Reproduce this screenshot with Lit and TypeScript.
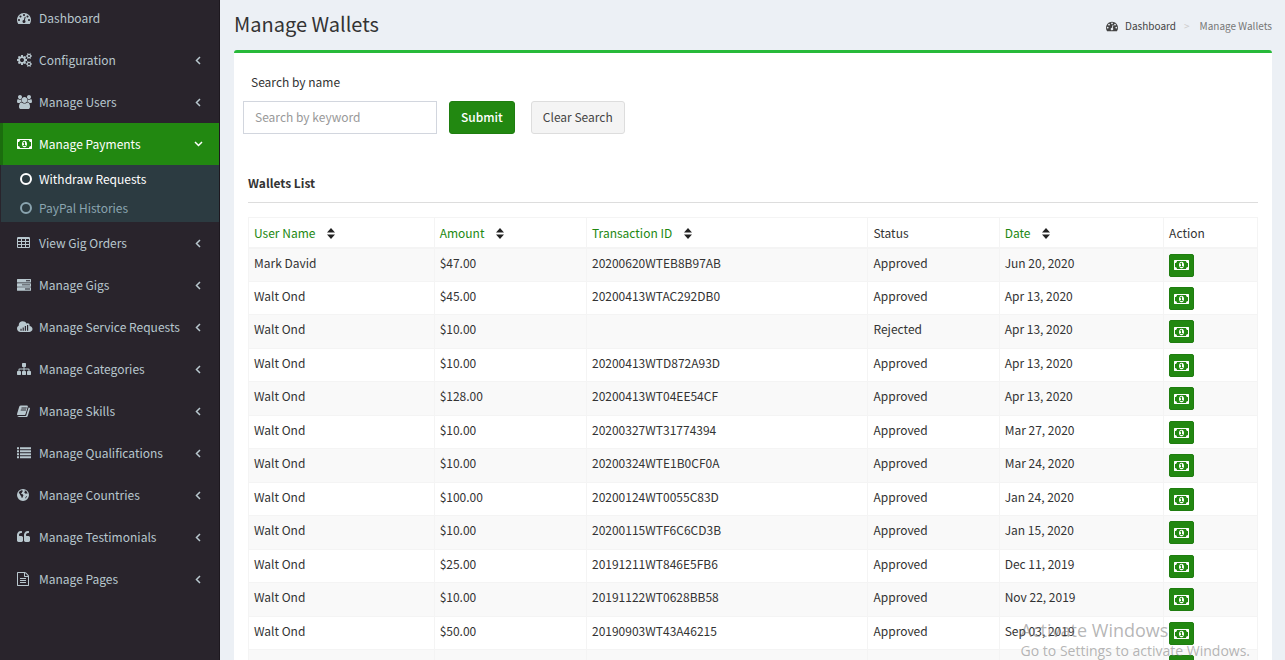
import { LitElement, html, css, svg } from "lit";
import { customElement, property } from "lit/decorators.js";

const small = (dy: number) =>
  `M1664 ${1408 + dy}q0-52-38-90t-90-38-90 38-38 90q0 53 37.5 90.5t90.5 37.5 90.5-37.5 37.5-90.5zM1920 ${1338 + dy}v140q0 16-149 31-12 27-30 52 51 113 51 138 0 4-4 7-122 71-124 71-8 0-46-47t-52-68q-20 2-30 2t-30-2q-14 21-52 68t-46 47q-2 0-124-71-4-3-4-7 0-25 51-138-18-25-30-52-149-15-149-31v-140q0-16 149-31 13-29 30-52-51-113-51-138 0-4 4-7 4-2 35-20t59-34 30-16q8 0 46 46.5t52 67.5q20-2 30-2t30 2q51-71 92-112l6-2q4 0 124 70 4 3 4 7 0 25-51 138 17 23 30 52 149 15 149 31z`;

const quote = (x: number) =>
  `M${x} 960v384q0 80-56 136t-136 56h-384q-80 0-136-56t-56-136v-704q0-104 40.5-198.5t109.5-163.5 163.5-109.5 198.5-40.5h64q26 0 45 19t19 45v128q0 26-19 45t-45 19h-64q-106 0-181 75t-75 181v32q0 40 28 68t68 28h224q80 0 136 56t56 136z`;

const rect = (x: number, y: number, w: number, h: number) => `M${x} ${y}h${w}v${h}h${-w}z`;

const ICONS: Record<string, { w: number; d: string }> = {
  dashboard: {
    w: 1792,
    d: "M384 1152q0-53-37.5-90.5t-90.5-37.5-90.5 37.5-37.5 90.5 37.5 90.5 90.5 37.5 90.5-37.5 37.5-90.5zm192-448q0-53-37.5-90.5t-90.5-37.5-90.5 37.5-37.5 90.5 37.5 90.5 90.5 37.5 90.5-37.5 37.5-90.5zm428 481l101-382q6-26-7.5-48.5t-38.5-29.5-48 6.5-30 39.5l-101 382q-60 5-107 43.5t-63 98.5q-20 77 20 146t117 89 146-20 89-117q16-60-6-117t-72-91zm660-33q0-53-37.5-90.5t-90.5-37.5-90.5 37.5-37.5 90.5 37.5 90.5 90.5 37.5 90.5-37.5 37.5-90.5zm-640-640q0-53-37.5-90.5t-90.5-37.5-90.5 37.5-37.5 90.5 37.5 90.5 90.5 37.5 90.5-37.5 37.5-90.5zm448 192q0-53-37.5-90.5t-90.5-37.5-90.5 37.5-37.5 90.5 37.5 90.5 90.5 37.5 90.5-37.5 37.5-90.5zm320 448q0 261-141 483-19 29-54 29h-1402q-35 0-54-29-141-221-141-483 0-182 71-348t191-286 286-191 348-71 348 71 286 191 191 286 71 348z",
  },
  cogs: {
    w: 1920,
    d:
      "M896 896q0-106-75-181t-181-75-181 75-75 181 75 181 181 75 181-75 75-181zM1280 805v185q0 10-7 19.5t-16 10.5l-155 24q-11 35-32 76 34 48 90 115 7 11 7 20 0 12-7 19-23 30-82.5 89.5t-78.5 59.5q-11 0-21-7l-115-90q-37 19-77 31-11 108-23 155-7 24-30 24h-186q-11 0-20-7.5t-10-17.5l-23-153q-34-10-75-31l-118 89q-7 7-20 7-11 0-21-8-144-133-144-160 0-9 7-19 10-14 41-53t47-61q-23-44-35-82l-152-24q-10-1-17-9.5t-7-19.5v-185q0-10 7-19.5t16-10.5l155-24q11-35 32-76-34-48-90-115-7-11-7-20 0-12 7-20 22-30 82-89t79-59q11 0 21 7l115 90q34-18 77-32 11-108 23-154 7-24 30-24h186q11 0 20 7.5t10 17.5l23 153q34 10 75 31l118-89q8-7 20-7 11 0 21 8 144 133 144 160 0 8-7 19-12 16-42 54t-45 60q23 48 34 82l152 23q10 2 17 10.5t7 19.5z" +
      small(0) +
      small(-1024),
  },
  users: {
    w: 1920,
    d: "M593 896q-162 5-265 128h-134q-82 0-138-40.5t-56-118.5q0-353 124-353 6 0 43.5 21t97.5 42.5 119 21.5q67 0 133-23-5 37-5 66 0 139 81 256zm1071 637q0 120-73 189.5t-194 69.5h-874q-121 0-194-69.5t-73-189.5q0-53 3.5-103.5t14-109 26.5-108.5 43-97.5 62-81 85.5-53.5 111.5-20q10 0 43 21.5t73 48 107 48 135 21.5 135-21.5 107-48 73-48 43-21.5q61 0 111.5 20t85.5 53.5 62 81 43 97.5 26.5 108.5 14 109 3.5 103.5zm-1024-1277q0 106-75 181t-181 75-181-75-75-181 75-181 181-75 181 75 75 181zm704 384q0 159-112.5 271.5t-271.5 112.5-271.5-112.5-112.5-271.5 112.5-271.5 271.5-112.5 271.5 112.5 112.5 271.5zm576 225q0 78-56 118.5t-138 40.5h-134q-103-123-265-128 81-117 81-256 0-29-5-66 66 23 133 23 59 0 119-21.5t97.5-42.5 43.5-21q124 0 124 353zm-128-609q0 106-75 181t-181 75-181-75-75-181 75-181 181-75 181 75 75 181z",
  },
  money: {
    w: 1920,
    d: "M768 1152h384v-96h-128v-448h-114l-148 137 77 80q42-37 55-57h2v288h-128v96zm512-256q0 70-21 142t-59.5 134-101.5 101-138 39-138-39-101.5-101-59.5-134-21-142 21-142 59.5-134 101.5-101 138-39 138 39 101.5 101 59.5 134 21 142zm512 256v-512q-106 0-181-75t-75-181h-1152q0 106-75 181t-181 75v512q106 0 181 75t75 181h1152q0-106 75-181t181-75zm128-832v1152q0 26-19 45t-45 19h-1792q-26 0-45-19t-19-45v-1152q0-26 19-45t45-19h1792q26 0 45 19t19 45z",
  },
  table: {
    w: 1664,
    d:
      "M160 128h1344q66 0 113 47t47 113v1088q0 66-47 113t-113 47h-1344q-66 0-113-47t-47-113v-1088q0-66 47-113t113-47z" +
      [128, 640, 1152].map((x) => [384, 768, 1152].map((y) => rect(x, y, 384, 256)).join("")).join(""),
  },
  tasks: {
    w: 1792,
    d: [
      "M64 128h1664q64 0 64 64v320q0 64-64 64h-1664q-64 0-64-64v-320q0-64 64-64z" + rect(1152, 290, 512, 120),
      "M64 660h1664q64 0 64 64v320q0 64-64 64h-1664q-64 0-64-64v-320q0-64 64-64z" + rect(640, 822, 1024, 120),
      "M64 1192h1664q64 0 64 64v320q0 64-64 64h-1664q-64 0-64-64v-320q0-64 64-64z" + rect(1024, 1354, 640, 120),
    ].join(""),
  },
  cloud: {
    w: 1984,
    d:
      "M1600 768q22-48 22-104 0-106-75-181t-181-75q-84 0-154 50-64-138-194-222t-286-84q-212 0-362 150t-150 362v60q-100 50-160 148t-60 216q0 180 126 314t322 134h1120q160 0 288-116t128-284q0-138-108-246t-276-122z" +
      rect(440, 1120, 150, 256) + rect(720, 960, 150, 416) + rect(1000, 768, 150, 608) + rect(1280, 640, 150, 736),
  },
  sitemap: {
    w: 1792,
    d: "M1792 1248v320q0 40-28 68t-68 28h-320q-40 0-68-28t-28-68v-320q0-40 28-68t68-28h96v-192h-512v192h96q40 0 68 28t28 68v320q0 40-28 68t-68 28h-320q-40 0-68-28t-28-68v-320q0-40 28-68t68-28h96v-192h-512v192h96q40 0 68 28t28 68v320q0 40-28 68t-68 28h-320q-40 0-68-28t-28-68v-320q0-40 28-68t68-28h96v-192q0-52 38-90t90-38h512v-192h-96q-40 0-68-28t-28-68v-320q0-40 28-68t68-28h320q40 0 68 28t28 68v320q0 40-28 68t-68 28h-96v192h512q52 0 90 38t38 90v192h96q40 0 68 28t28 68z",
  },
  book: {
    w: 1664,
    d: "M1639 478q40 57 18 129l-275 906q-19 64-76.500 107.500t-122.500 43.500h-923q-77 0-148.500-53.500t-99.500-131.500q-24-67-2-127 0-4 3-27t4-37q1-8-3-21.500t-3-19.500l269-881q23-76 90-131t137-55h761q53 0 96 40t26 100l-272 896q-36 119-71 153t-127 34h-869q-27 0-38 15-11 16-1 43 24 70 144 70h923q29 0 56-15.500t35-41.500l300-987q7-22 5-57 38 15 59 43zM575 480l-21 64q-4 13 2 22.500t20 9.500h608q13 0 25.500-9.500t16.500-22.500l21-64q4-13-2-22.500t-20-9.500h-608q-13 0-25.500 9.500t-16.500 22.500zM492 736l-21 64q-4 13 2 22.500t20 9.500h608q13 0 25.500-9.500t16.500-22.500l21-64q4-13-2-22.500t-20-9.500h-608q-13 0-25.500 9.500t-16.500 22.500z",
  },
  list: {
    w: 1792,
    d: [160, 544, 928, 1312].map((y) => rect(0, y, 256, 240) + rect(384, y, 1408, 240)).join(""),
  },
  globe: {
    w: 1536,
    d: "M768 128a768 768 0 1 0 0 1536a768 768 0 1 0 0-1536zM560 300l150 20 60 90-120 60-20 130-110 60 60 110 150 30 90 130-60 150-90 200-80-20-50-220-130-130-60-190-130-90 60-160 130-100zM960 290l220 100 130 190 40 160-110-40-120 50-160-100-20-150 90-70zM1180 1050l90-20-20 110-200 210-30-40z",
  },
  quote: { w: 1664, d: quote(768) + quote(1664) },
  file: {
    w: 1536,
    d: "M1468 380q28 28 48 76t20 88v1152q0 40-28 68t-68 28h-1344q-40 0-68-28t-28-68v-1600q0-40 28-68t68-28h896q40 0 88 20t76 48zm-444-244v376h376q-10-29-22-41l-313-313q-12-12-41-22zm384 1528v-1024h-416q-40 0-68-28t-28-68v-416h-768v1536h1280zm-1024-864q0-14 9-23t23-9h704q14 0 23 9t9 23v64q0 14-9 23t-23 9h-704q-14 0-23-9t-9-23v-64zm736 224q14 0 23 9t9 23v64q0 14-9 23t-23 9h-704q-14 0-23-9t-9-23v-64q0-14 9-23t23-9h704zm0 256q14 0 23 9t9 23v64q0 14-9 23t-23 9h-704q-14 0-23-9t-9-23v-64q0-14 9-23t23-9h704z",
  },
};

@customElement("fa-icon")
export class FaIcon extends LitElement {
  @property() name = "";

  static styles = css`
    :host {
      display: inline-flex;
    }
    .glyph {
      display: block;
      height: 1em;
      overflow: visible;
      fill: currentColor;
      fill-rule: evenodd;
    }
  `;

  render() {
    const icon = ICONS[this.name];
    if (!icon) return null;
    return html`<svg class="glyph" viewBox="0 0 ${icon.w} 1792" aria-hidden="true">${svg`<path d=${icon.d}></path>`}</svg>`;
  }
}

interface MenuItem {
  icon: string;
  label: string;
  leaf?: boolean;
  children?: string[];
}

const MENU: MenuItem[] = [
  { icon: "dashboard", label: "Dashboard", leaf: true },
  { icon: "cogs", label: "Configuration" },
  { icon: "users", label: "Manage Users" },
  { icon: "money", label: "Manage Payments", children: ["Withdraw Requests", "PayPal Histories"] },
  { icon: "table", label: "View Gig Orders" },
  { icon: "tasks", label: "Manage Gigs" },
  { icon: "cloud", label: "Manage Service Requests" },
  { icon: "sitemap", label: "Manage Categories" },
  { icon: "book", label: "Manage Skills" },
  { icon: "list", label: "Manage Qualifications" },
  { icon: "globe", label: "Manage Countries" },
  { icon: "quote", label: "Manage Testimonials" },
  { icon: "file", label: "Manage Pages" },
];

@customElement("side-menu")
export class SideMenu extends LitElement {
  static styles = css`
    :host {
      display: block;
      background: #29242c;
      border-right: 1px solid #1d181f;
      overflow: hidden;
    }
    .menu,
    .sub {
      list-style: none;
      margin: 0;
      padding: 0;
    }
    .menu {
      margin-top: -3px;
    }
    .link {
      display: flex;
      align-items: center;
      height: 42px;
      box-sizing: border-box;
      padding: 0 16px 0 14px;
      border-left: 3px solid transparent;
      color: #b8c7ce;
      text-decoration: none;
      white-space: nowrap;
    }
    .link.active {
      background: #228811;
      border-left-color: #1b6d0e;
      color: #fff;
    }
    .icon {
      width: 22px;
      font-size: 14px;
    }
    .label {
      flex: 1;
    }
    .arrow {
      width: 9px;
      height: 9px;
      fill: none;
      stroke: currentColor;
      stroke-width: 1.5;
    }
    .sub {
      display: grid;
      gap: 1px;
      margin-left: 1px;
      background: #2c3b41;
    }
    .sublink {
      display: flex;
      align-items: center;
      gap: 7px;
      height: 28px;
      padding-left: 19px;
      color: #8aa4af;
      text-decoration: none;
    }
    .sublink.current {
      color: #fff;
    }
    .ring {
      width: 12px;
      height: 12px;
      fill: none;
      stroke: currentColor;
      stroke-width: 2;
    }
  `;

  render() {
    return html`<nav aria-label="Main">
      <ul class="menu">
        ${MENU.map(
          (item) => html`<li>
            <a class="link ${item.children ? "active" : ""}" href="#">
              <fa-icon class="icon" name=${item.icon}></fa-icon>
              <span class="label">${item.label}</span>
              ${item.leaf
                ? null
                : html`<svg class="arrow" viewBox="0 0 9 9" aria-hidden="true">
                    <path d=${item.children ? "M1 2l3.500 3.500 3.500-3.500" : "M6 1l-3.500 3.500 3.500 3.500"}></path>
                  </svg>`}
            </a>
            ${item.children
              ? html`<ul class="sub">
                  ${item.children.map(
                    (child, i) => html`<li>
                      <a class="sublink ${i === 0 ? "current" : ""}" href="#">
                        <svg class="ring" viewBox="0 0 12 12" aria-hidden="true"><circle cx="6" cy="6" r="5"></circle></svg>
                        ${child}
                      </a>
                    </li>`
                  )}
                </ul>`
              : null}
          </li>`
        )}
      </ul>
    </nav>`;
  }
}

const COLUMNS = [
  { label: "User Name", key: "user", sortable: true },
  { label: "Amount", key: "amount", sortable: true },
  { label: "Transaction ID", key: "txn", sortable: true },
  { label: "Status", key: "status", sortable: false },
  { label: "Date", key: "date", sortable: true },
  { label: "Action", key: "action", sortable: false },
];

const ROWS = [
  ["Mark David", "$47.00", "20200620WTEB8B97AB", "Approved", "Jun 20, 2020"],
  ["Walt Ond", "$45.00", "20200413WTAC292DB0", "Approved", "Apr 13, 2020"],
  ["Walt Ond", "$10.00", "", "Rejected", "Apr 13, 2020"],
  ["Walt Ond", "$10.00", "20200413WTD872A93D", "Approved", "Apr 13, 2020"],
  ["Walt Ond", "$128.00", "20200413WT04EE54CF", "Approved", "Apr 13, 2020"],
  ["Walt Ond", "$10.00", "20200327WT31774394", "Approved", "Mar 27, 2020"],
  ["Walt Ond", "$10.00", "20200324WTE1B0CF0A", "Approved", "Mar 24, 2020"],
  ["Walt Ond", "$100.00", "20200124WT0055C83D", "Approved", "Jan 24, 2020"],
  ["Walt Ond", "$10.00", "20200115WTF6C6CD3B", "Approved", "Jan 15, 2020"],
  ["Walt Ond", "$25.00", "20191211WT846E5FB6", "Approved", "Dec 11, 2019"],
  ["Walt Ond", "$10.00", "20191122WT0628BB58", "Approved", "Nov 22, 2019"],
  ["Walt Ond", "$50.00", "20190903WT43A46215", "Approved", "Sep 03, 2019"],
  ["", "", "", "", ""],
];

@customElement("wallet-table")
export class WalletTable extends LitElement {
  static styles = css`
    :host {
      display: block;
    }
    .grid {
      width: 100%;
      table-layout: fixed;
      border-collapse: collapse;
      border: 1px solid #f4f4f4;
    }
    .user { width: 18.4%; }
    .amount { width: 15.1%; }
    .txn { width: 27.9%; }
    .status { width: 13%; }
    .date { width: 16.3%; }
    .head,
    .cell {
      box-sizing: border-box;
      border: 1px solid #f4f4f4;
      padding: 5px 5px 0;
      text-align: left;
      vertical-align: top;
      font-weight: 400;
      line-height: 20px;
    }
    .head {
      height: 30px;
      border-bottom-width: 2px;
    }
    .cell {
      height: 33px;
      line-height: 18px;
    }
    .row:nth-child(odd) {
      background: #f9f9f9;
    }
    .row:nth-child(odd) .cell {
      height: 34px;
    }
    .sort {
      display: inline-flex;
      align-items: center;
      gap: 12px;
      color: #228811;
      text-decoration: none;
    }
    .updown {
      width: 8px;
      height: 11px;
      fill: #222;
    }
    .pay {
      display: flex;
      align-items: center;
      justify-content: center;
      width: 25px;
      height: 23px;
      padding: 0;
      border: 1px solid #1f7d10;
      border-radius: 2px;
      background: #228811;
      color: #fff;
      font-size: 14px;
    }
  `;

  render() {
    return html`<table class="grid">
      <thead>
        <tr>
          ${COLUMNS.map(
            (col) => html`<th class="head ${col.key}" scope="col">
              ${col.sortable
                ? html`<a class="sort" href="#"
                    >${col.label}<svg class="updown" viewBox="0 0 8 11" aria-hidden="true">
                      <path d="M0 4.500l4-4.500 4 4.500zM0 6.500h8l-4 4.500z"></path></svg
                  ></a>`
                : col.label}
            </th>`
          )}
        </tr>
      </thead>
      <tbody>
        ${ROWS.map(
          (row) => html`<tr class="row">
            ${row.map((value) => html`<td class="cell">${value}</td>`)}
            <td class="cell">
              <button class="pay" type="button" aria-label="Payment"><fa-icon name="money"></fa-icon></button>
            </td>
          </tr>`
        )}
      </tbody>
    </table>`;
  }
}

@customElement("app-root")
export class AppRoot extends LitElement {
  static styles = css`
    :host {
      position: relative;
      display: grid;
      grid-template-columns: 220px minmax(0, 1fr);
      height: 100vh;
      overflow: hidden;
      background: #ecf0f5;
      color: #333;
      font-family: "Noto Sans CJK SC", sans-serif;
      font-size: 12px;
      line-height: 20px;
    }
    .content {
      overflow: hidden;
      padding: 0 13px 0 14px;
    }
    .header {
      display: flex;
      align-items: center;
      justify-content: space-between;
      box-sizing: border-box;
      height: 50px;
      padding-bottom: 2px;
    }
    .title {
      margin: 0;
      font-size: 20px;
      font-weight: 400;
      line-height: 30px;
    }
    .crumbs {
      display: flex;
      align-items: center;
      gap: 8px;
      padding-top: 3px;
      font-size: 10px;
      color: #777;
    }
    .home {
      display: flex;
      align-items: center;
      gap: 7px;
      color: #444;
      text-decoration: none;
    }
    .home-icon {
      font-size: 12px;
    }
    .sep {
      color: #ccc;
      margin-right: 2px;
    }
    .box {
      border-top: 3px solid #28b93a;
      border-radius: 3px;
      background: #fff;
      padding: 19px 14px 0;
    }
    .search-label {
      display: block;
      padding-left: 3px;
    }
    .search {
      display: flex;
      margin: 9px 0 0 -5px;
    }
    .field,
    .btn {
      box-sizing: border-box;
      height: 33px;
      font: inherit;
      border: 1px solid #d2d6de;
      padding: 0 11px 2px;
    }
    .field {
      width: 194px;
      margin-right: 12px;
      color: #555;
    }
    .field::placeholder {
      color: #999;
      opacity: 1;
    }
    .btn {
      border-radius: 3px;
      white-space: nowrap;
    }
    .submit {
      background: #228811;
      border-color: #1f7d10;
      color: #fff;
      font-weight: 500;
      margin-right: 16px;
    }
    .clear {
      background: #f4f4f4;
      border-color: #ddd;
      color: #444;
    }
    .subtitle {
      margin: 39px 0 14px;
      padding-bottom: 9px;
      border-bottom: 1px solid #ddd;
      font-size: 12px;
      font-weight: 700;
      line-height: 20px;
    }
    .watermark {
      position: absolute;
      right: 35px;
      bottom: 0;
      font-family: "Open Sans", sans-serif;
      font-size: 14px;
      line-height: 18px;
      color: rgba(120, 120, 120, 0.55);
      pointer-events: none;
    }
    .watermark-title {
      font-size: 18px;
      line-height: 24px;
    }
  `;

  render() {
    return html`
      <side-menu></side-menu>
      <main class="content">
        <header class="header">
          <h1 class="title">Manage Wallets</h1>
          <nav class="crumbs" aria-label="Breadcrumb">
            <a class="home" href="#"><fa-icon class="home-icon" name="dashboard"></fa-icon>Dashboard</a>
            <span class="sep">&gt;</span>
            <span>Manage Wallets</span>
          </nav>
        </header>
        <section class="box">
          <label class="search-label" for="keyword">Search by name</label>
          <form class="search">
            <input class="field" id="keyword" type="text" placeholder="Search by keyword" />
            <button class="btn submit" type="button">Submit</button>
            <button class="btn clear" type="button">Clear Search</button>
          </form>
          <h2 class="subtitle">Wallets List</h2>
          <wallet-table></wallet-table>
        </section>
      </main>
      <aside class="watermark">
        <div class="watermark-title">Activate Windows</div>
        <div>Go to Settings to activate Windows.</div>
      </aside>
    `;
  }
}
